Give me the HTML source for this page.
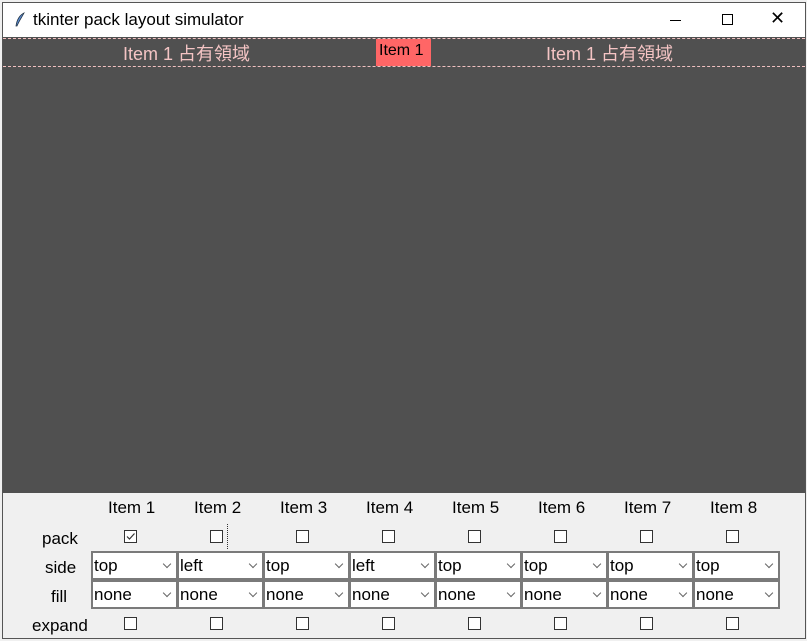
<!DOCTYPE html>
<html><head><meta charset="utf-8"><style>
*{margin:0;padding:0;box-sizing:border-box}
body{width:807px;height:641px;background:#f0f0f0;position:relative;overflow:hidden;font-family:"Segoe UI","Liberation Sans","Noto Sans CJK TC",sans-serif}
#win{position:absolute;left:2px;top:2px;width:804px;height:637px;background:#f0f0f0;border:1px solid #555}
#title{position:absolute;left:0;top:0;width:802px;height:34px;background:#fff;font-size:16px;color:#000}
#dark{position:absolute;left:0;top:34px;width:802px;height:456px;background:#505050}
.dash{position:absolute;left:0;width:802px;border-top:1px dashed #f0c0c0}
.t{position:absolute;font-size:17px;white-space:nowrap}
.cb{position:absolute;width:13px;height:13px;border:1px solid #333;background:#fff}
.combo{position:absolute;width:87px;height:29px;border:2px solid #7a7a7a;background:#fff;font-size:17px;line-height:26px;padding-left:1px;color:#000}
.combo:after{content:"";position:absolute;right:6px;top:8px;width:5px;height:5px;border-right:1px solid #666;border-bottom:1px solid #666;transform:rotate(45deg)}
</style></head><body>
<div id="win">
<div id="title">
<svg style="position:absolute;left:11px;top:9px" width="12" height="16" viewBox="0 0 12 16"><path d="M10 1 C6 3 3 7 2 14 L3 14 C5 9 8 5 10 1Z" fill="#5a8ad0" stroke="#234" stroke-width="0.8"/></svg>
<div class="t" style="left:30px;top:7px;font-size:17px">tkinter pack layout simulator</div>
<div style="position:absolute;left:667px;top:17px;width:11px;height:1px;background:#000"></div>
<div style="position:absolute;left:719px;top:11px;width:11px;height:11px;border:1px solid #000"></div>
<div class="t" style="left:767px;top:5px;font-size:18px;font-weight:300">✕</div>
</div>
<div id="dark">
<div class="dash" style="top:1px"></div>
<div class="dash" style="top:29px"></div>
<div class="t" style="left:120px;top:3px;color:#f4c4c4;font-size:18px">Item 1 占有領域</div>
<div style="position:absolute;left:373px;top:2px;width:55px;height:27px;background:#ff6666"></div>
<div class="t" style="left:376px;top:5px;color:#000;font-size:16px">Item 1</div>
<div class="t" style="left:543px;top:3px;color:#f4c4c4;font-size:18px">Item 1 占有領域</div>
</div>
<div class="t" style="left:39px;top:526px">pack</div>
<div class="t" style="left:42px;top:555px">side</div>
<div class="t" style="left:48px;top:584px">fill</div>
<div class="t" style="left:29px;top:613px">expand</div>
</div>
<div id="cols"></div>
<script>
var sides=["top","left","top","left","top","top","top","top"];
var h="";
for(var i=0;i<8;i++){
 var cx=133+86*i;
 h+='<div class="t" style="left:'+(cx-25)+'px;top:498px">Item '+(i+1)+'</div>';
 h+='<div class="cb" style="left:'+(cx-9)+'px;top:530px">'+(i==0?'<svg width="11" height="11" style="position:absolute;left:0;top:0"><path d="M2 5.5 L4.5 8 L9.5 2.5" fill="none" stroke="#333" stroke-width="1.2"/></svg>':'')+'</div>';
 h+='<div class="cb" style="left:'+(cx-9)+'px;top:617px"></div>';
 h+='<div class="combo" style="left:'+(91+86*i)+'px;top:551px">'+sides[i]+'</div>';
 h+='<div class="combo" style="left:'+(91+86*i)+'px;top:580px">none</div>';
}
h+='<div style="position:absolute;left:227px;top:524px;height:25px;border-left:1px dotted #333"></div>';
document.getElementById("cols").innerHTML=h;
</script>
</body></html>
